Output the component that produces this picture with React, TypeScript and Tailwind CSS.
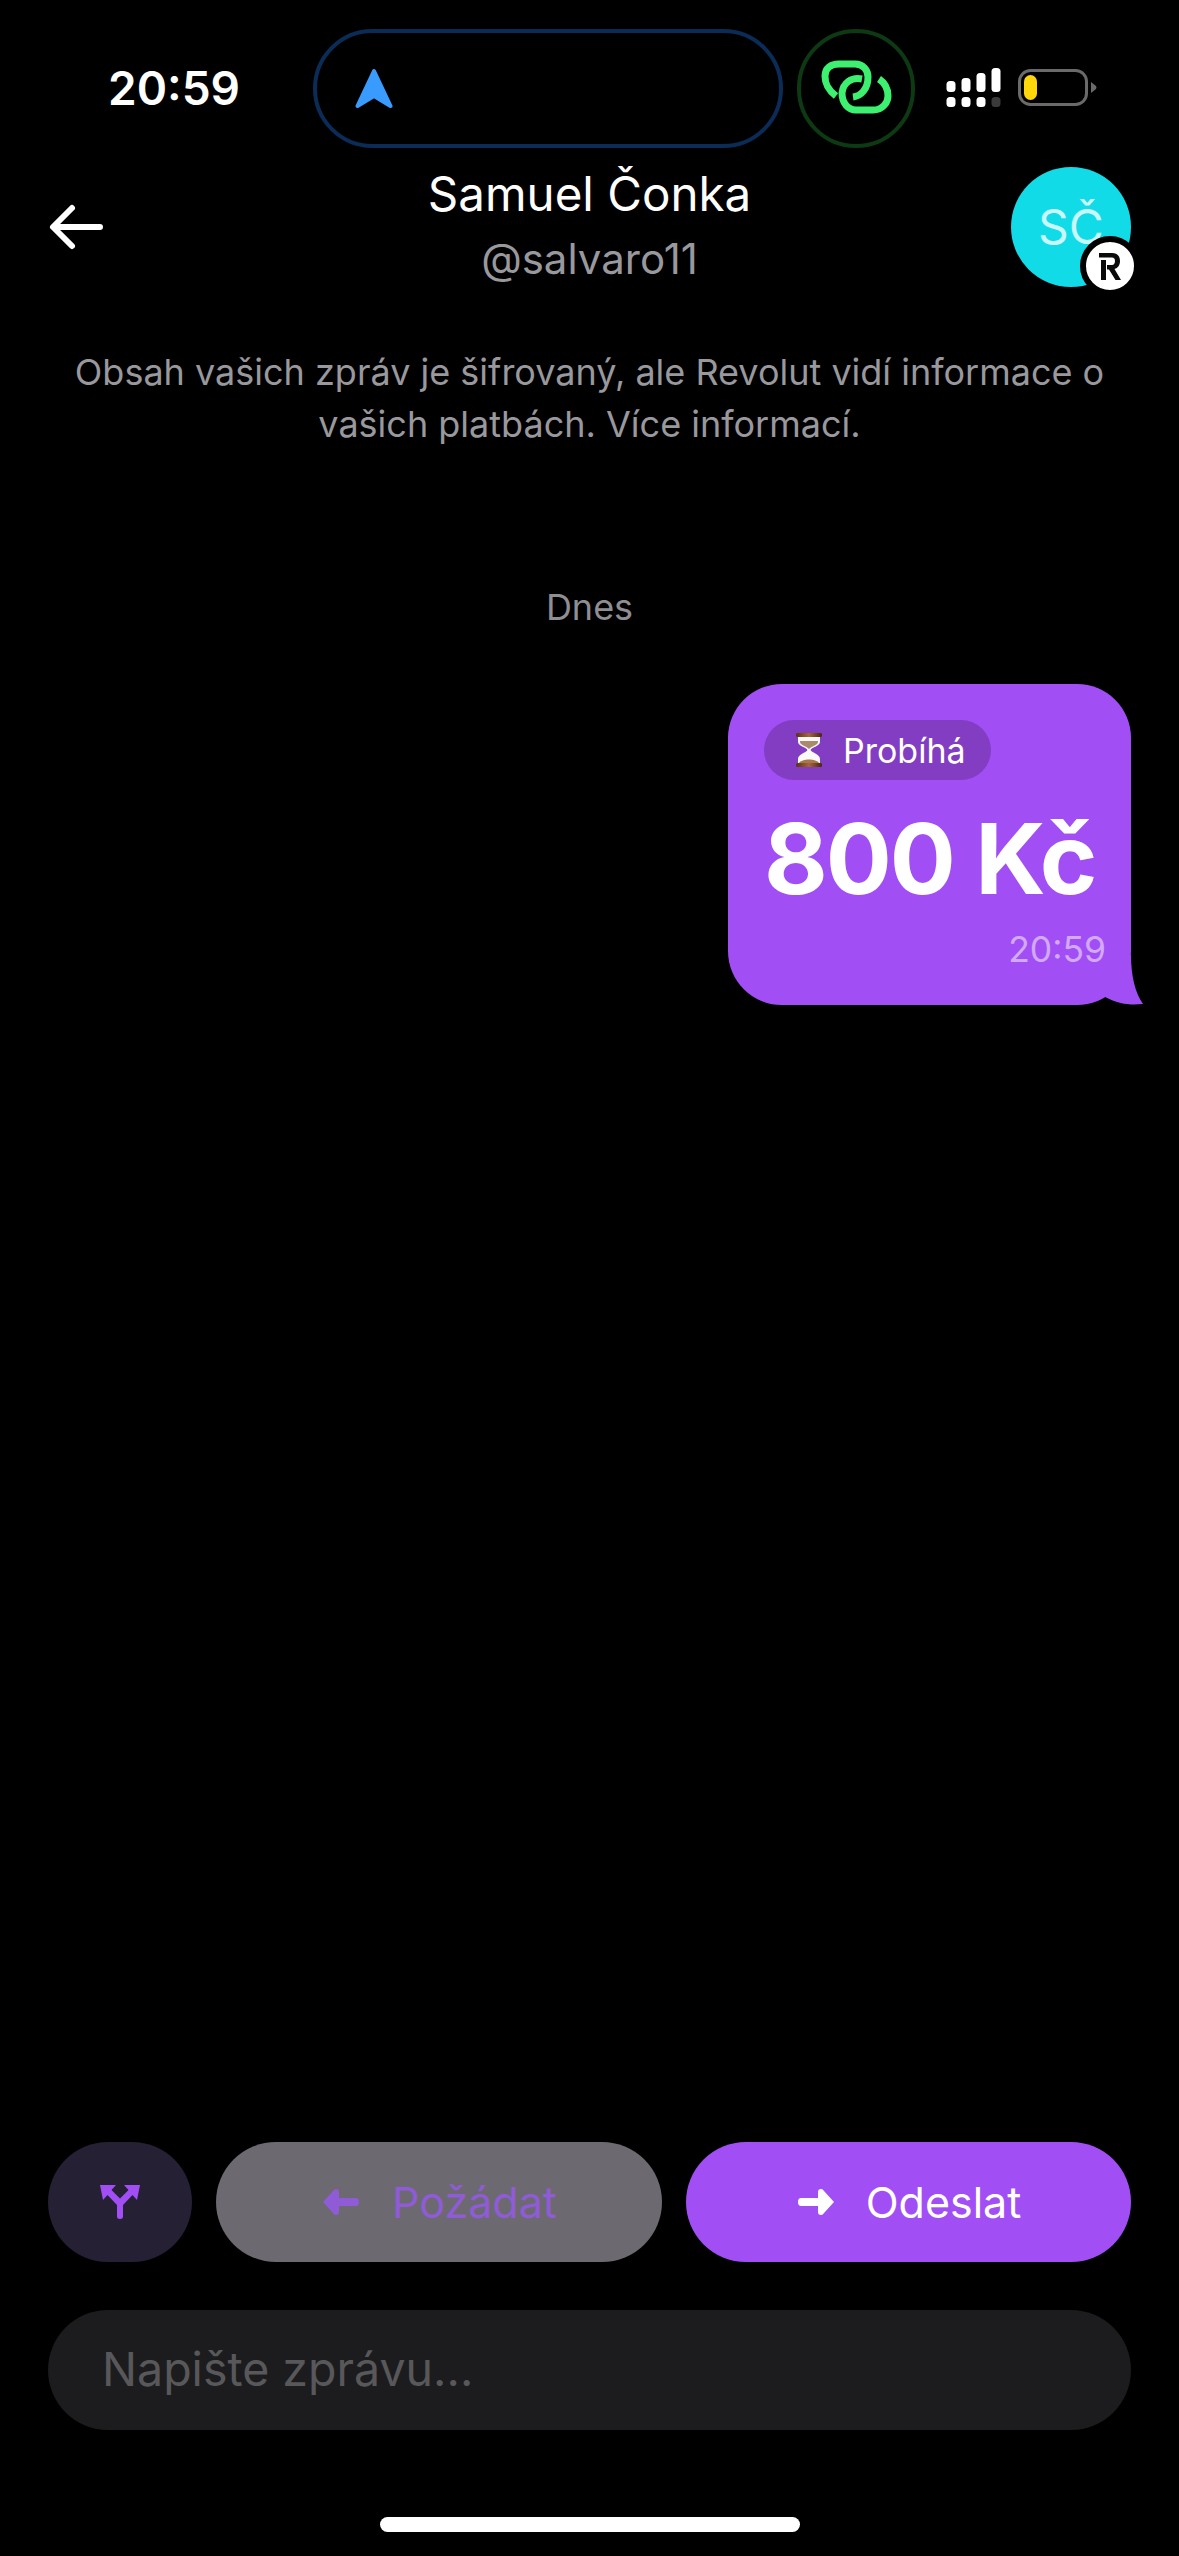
const FONT = "font-['Inter','Noto_Sans',sans-serif]"

function StatusBar() {
  return (
    <div className="flex h-[148px] shrink-0 items-start pt-[29px]">
      <div className="ml-[108px] mt-[30px] w-[205px] text-[46px] font-semibold leading-[58px] text-white">20:59</div>
      <div className="flex h-[119px] w-[470px] items-center rounded-[60px] border-[4px] border-[#0b2c56] pl-[38px]">
        <svg width="38" height="42" viewBox="0 0 38 42">
          <path d="M19 3 L35.500 38 L19 28 L2.500 38 Z" fill="#3a9bff" stroke="#3a9bff" strokeWidth="4" strokeLinejoin="round" />
        </svg>
      </div>
      <div className="ml-[14px] flex h-[119px] w-[118px] items-center justify-center rounded-full border-[4px] border-[#0d3a12]">
        <svg width="110" height="100" viewBox="0 0 110 100" fill="none" stroke="#3df06f" strokeWidth="7" className="shrink-0">
          <path d="M35 57 C26 50 24 44 24 37 C24 29 30 25 38 25 H54 C62 25 67 31 67 38 C67 50 60 57 52 58" />
          <path d="M61 40 C50 38 42 44 41 54 C41 64 47 71 55 71 H72 C82 71 87 63 87 57 C87 50 84 44 78 40" />
        </svg>
      </div>
      <svg width="56" height="40" viewBox="0 0 56 40" className="ml-[31px] mt-[39px]" fill="#fff">
        <rect x="0.5" y="13" width="9" height="11" rx="3.5" />
        <rect x="15.5" y="10" width="9" height="14" rx="3.5" />
        <rect x="30.5" y="5" width="9" height="19" rx="3.5" />
        <rect x="45.5" y="0" width="9" height="24" rx="3.5" />
        <rect x="0.5" y="29" width="9" height="10" rx="3.5" />
        <rect x="15.5" y="29" width="9" height="10" rx="3.5" />
        <rect x="30.5" y="29" width="9" height="10" rx="3.5" />
        <rect x="45.5" y="29" width="9" height="10" rx="3.5" fill="#3a3a3a" />
      </svg>
      <svg width="80" height="38" viewBox="0 0 80 38" className="ml-[16px] mt-[40px]" fill="none">
        <rect x="1.5" y="1.5" width="67" height="34" rx="11" stroke="#6a6a6a" strokeWidth="3" />
        <rect x="6" y="6" width="13" height="25" rx="6.5" fill="#ffd60a" />
        <path d="M73 13 L78 17 Q79 18.500 78 20 L73 24 Z" fill="#6a6a6a" />
      </svg>
    </div>
  )
}

function Header() {
  return (
    <div className="mt-[19px] flex h-[120px] shrink-0 items-start justify-between px-[48px]">
      <div className="w-[120px]">
        <svg width="60" height="48" viewBox="0 0 60 48" fill="none" stroke="#fff" strokeWidth="6" strokeLinecap="round" strokeLinejoin="round" className="mt-[36px]">
          <path d="M52 24 H7 M24 5 L5 24 L24 43" />
        </svg>
      </div>
      <div className="flex flex-col items-center">
        <div className="mt-[-2px] text-[47.500px] font-normal leading-[58px] text-white">Samuel Čonka</div>
        <div className="mt-[11px] text-[42px] leading-[50px] text-[#98989d]">@salvaro11</div>
      </div>
      <div className="relative flex h-[120px] w-[120px] items-center justify-center rounded-full bg-[#12dbe8]">
        <span className="text-[48px] leading-none text-[#c8f8fb]">SČ</span>
        <div className="absolute left-[69px] top-[69px] flex h-[60px] w-[60px] items-center justify-center rounded-full border-[6px] border-black bg-white">
          <svg width="22" height="27" viewBox="0 0 22 27" fill="#0a0a0a">
            <path d="M0 0 H13 C18.500 0 21 3.500 21 8 C21 12 19 15 15.500 16 L22 27 H16.500 L10 16.500 H8 V12 H13 C15 12 16 10 16 8 C16 6 15 4.500 13 4.500 H0 Z" />
            <rect x="2" y="7" width="5" height="20" />
          </svg>
        </div>
      </div>
    </div>
  )
}

function Hourglass() {
  return (
    <svg width="28" height="36" viewBox="0 0 28 36">
      <defs>
        <linearGradient id="wood" x1="0" x2="1" y1="0" y2="0">
          <stop offset="0" stopColor="#5c2f14" />
          <stop offset="0.5" stopColor="#a5673a" />
          <stop offset="1" stopColor="#4a230e" />
        </linearGradient>
      </defs>
      <path d="M3 4 H25 V10 C25 14 17 15 15.500 18 C17 21 25 22 25 27 V32 H3 V27 C3 22 11 21 12.500 18 C11 15 3 14 3 10 Z" fill="#fbf9f7" />
      <path d="M5 9 H23 V10 C23 13 17 14 14 17 C11 14 5 13 5 10 Z" fill="#a98a6c" />
      <path d="M14 27.500 C18 27.500 23 29 24 31 H4 C5 29 10 27.500 14 27.500 Z" fill="#a8764c" />
      <rect x="1" y="1" width="26" height="4" rx="1.500" fill="url(#wood)" />
      <rect x="1" y="31" width="26" height="4" rx="1.500" fill="url(#wood)" />
    </svg>
  )
}

function Bubble() {
  return (
    <div className="mt-[57px] flex shrink-0 justify-end pr-[48px]">
      <div className="relative flex h-[321px] w-[403px] flex-col rounded-[54px] bg-[#a14ff5] pl-[36px] pt-[36px]">
        <div className="flex h-[60px] w-[227px] items-center rounded-full bg-[#823dc2] pl-[31px]">
          <Hourglass />
          <span className="ml-[20px] text-[34px] font-normal text-white">Probíhá</span>
        </div>
        <div className="mt-[21px] whitespace-nowrap text-[98px] font-bold leading-[116px] tracking-[-2px] text-white">800 Kč</div>
        <div className="mt-[11px] self-end pr-[25px] text-[35.500px] leading-[44px] text-[#d3a9fb]">20:59</div>
        <svg width="50" height="50" viewBox="0 0 50 50" className="absolute bottom-0 right-[-12px]">
          <path d="M38 0 C38 20 42 38 50 49 C38 50 28 50 12 42 L10 0 Z" fill="#a14ff5" />
        </svg>
      </div>
    </div>
  )
}

function ActionButtons() {
  return (
    <div className="flex h-[120px] gap-[24px]">
      <button type="button" className="flex w-[144px] items-center justify-center rounded-[60px] bg-[#252033]">
        <svg width="40" height="34" viewBox="0 0 40 34" fill="#a14ff5">
          <path d="M0 0 H16 L11.500 5 L20 13.500 L28.500 5 L24 0 H40 L37 15 L32.500 10 L23 20 V31.500 Q23 34 20 34 Q17 34 17 31.500 V20 L7.500 10 L3 15 Z" />
        </svg>
      </button>
      <button type="button" className="flex w-[446px] items-center justify-center gap-[33px] rounded-full bg-[#6c6a70] pl-[2px] text-[43px] font-normal text-[#8f5bd6]">
        <svg width="36" height="26" viewBox="0 0 36 26" fill="#8f5bd6">
          <path d="M13 0 Q16 0 16 3 V9 H33 Q36 9 36 13 Q36 17 33 17 H16 V23 Q16 26 13 26 Q11 26 10 24 L0 13 L10 2 Q11 0 13 0 Z" />
        </svg>
        Požádat
      </button>
      <button type="button" className="flex w-[445px] items-center justify-center gap-[32px] rounded-full bg-[#a14ff5] pl-[2px] text-[43px] font-normal text-white">
        <svg width="36" height="26" viewBox="0 0 36 26" fill="#fff">
          <path d="M23 0 Q20 0 20 3 V9 H3 Q0 9 0 13 Q0 17 3 17 H20 V23 Q20 26 23 26 Q25 26 26 24 L36 13 L26 2 Q25 0 23 0 Z" />
        </svg>
        Odeslat
      </button>
    </div>
  )
}

export default function App() {
  return (
    <div className={`flex h-[2556px] w-[1179px] flex-col overflow-hidden bg-black ${FONT}`}>
      <StatusBar />
      <Header />
      <p className="mt-[59px] text-center text-[36px] leading-[52px] text-[#98989d]">
        Obsah vašich zpráv je šifrovaný, ale Revolut vidí informace o
        <br />
        vašich platbách. Více informací.
      </p>
      <div className="mt-[137px] text-center text-[36px] leading-[40px] text-[#8e8e93]">Dnes</div>
      <Bubble />
      <div className="flex-1" />
      <div className="flex flex-col gap-[48px] px-[48px]">
        <ActionButtons />
        <div className="flex h-[120px] items-center rounded-full bg-[#1c1c1e] pl-[54px] text-[46.500px] text-[#58585a]">
          Napište zprávu...
        </div>
      </div>
      <div className="mx-auto mb-[24px] mt-[87px] h-[15px] w-[420px] rounded-full bg-white" />
    </div>
  )
}
